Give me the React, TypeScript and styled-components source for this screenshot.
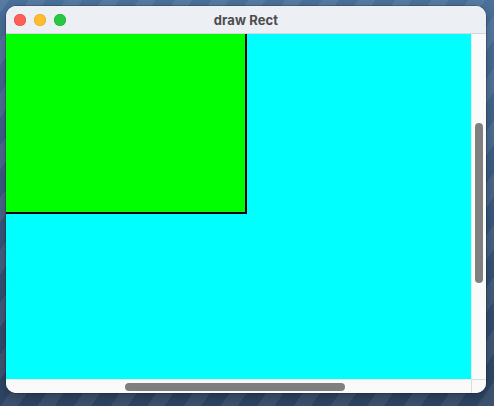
import React from "react";
import styled, { createGlobalStyle } from "styled-components";

const GlobalStyle = createGlobalStyle`
  html, body {
    margin: 0;
    padding: 0;
    width: 494px;
    height: 406px;
    overflow: hidden;
  }
  body {
    font-family: Inter, "Noto Sans", "Liberation Sans", sans-serif;
  }
`;

const Desktop = styled.div`
  box-sizing: border-box;
  width: 494px;
  height: 406px;
  padding: 6px 8px 13px 6px;
  display: flex;
  background:
    repeating-linear-gradient(
      -55deg,
      rgba(255, 255, 255, 0.07) 0px,
      rgba(255, 255, 255, 0.07) 14px,
      rgba(0, 0, 0, 0) 14px,
      rgba(0, 0, 0, 0) 30px
    ),
    linear-gradient(180deg, #4a719a 0%, #3a5b80 45%, #2d4463 100%);
`;

const Window = styled.div`
  flex: 1;
  display: flex;
  flex-direction: column;
  border-radius: 10px;
  overflow: hidden;
  background: #fafafa;
  box-shadow: 0 0 0 0.5px rgba(0, 0, 0, 0.35), 0 4px 12px rgba(0, 0, 0, 0.25);
`;

const TitleBar = styled.div`
  position: relative;
  height: 27px;
  flex: 0 0 27px;
  display: flex;
  align-items: center;
  justify-content: center;
  background: #eceff3;
  border-bottom: 1px solid #d4d6da;
`;

const Lights = styled.div`
  position: absolute;
  left: 8px;
  top: 8px;
  display: flex;
  gap: 8px;
`;

const Light = styled.span<{ $color: string; $ring: string }>`
  width: 12px;
  height: 12px;
  border-radius: 50%;
  background: ${(p) => p.$color};
  box-shadow: inset 0 0 0 0.5px ${(p) => p.$ring};
`;

const Title = styled.span`
  font-size: 13px;
  font-weight: 700;
  color: #4d4d4d;
  letter-spacing: 0.1px;
`;

const Body = styled.div`
  flex: 1;
  display: grid;
  grid-template-columns: 1fr 15px;
  grid-template-rows: 1fr 14px;
  min-height: 0;
`;

const Canvas = styled.div`
  background: #00ffff;
  overflow: hidden;
  display: block;
  line-height: 0;
`;

const VTrack = styled.div`
  background: #fafafa;
  border-left: 1px solid #e8e8e8;
  padding: 89px 0 0 3px;
  box-sizing: border-box;
`;

const VThumb = styled.div`
  width: 8px;
  height: 160px;
  border-radius: 4px;
  background: #7f7f7f;
`;

const HTrack = styled.div`
  background: #fafafa;
  border-top: 1px solid #e8e8e8;
  padding: 3px 0 0 119px;
  box-sizing: border-box;
`;

const HThumb = styled.div`
  width: 220px;
  height: 8px;
  border-radius: 4px;
  background: #7f7f7f;
`;

const Corner = styled.div`
  background: #fafafa;
  border-top: 1px solid #dcdcdc;
  border-left: 1px solid #dcdcdc;
`;

export default function App() {
  return (
    <>
      <GlobalStyle />
      <Desktop>
        <Window>
          <TitleBar>
            <Lights>
              <Light $color="#fe5f57" $ring="#e0443e" />
              <Light $color="#febc2e" $ring="#dea123" />
              <Light $color="#28c840" $ring="#1aab29" />
            </Lights>
            <Title>draw Rect</Title>
          </TitleBar>
          <Body>
            <Canvas>
              <svg width="465" height="345" viewBox="0 0 465 345">
                <rect
                  x={-2}
                  y={-2}
                  width={242}
                  height={181}
                  fill="#00ff00"
                  stroke="#000000"
                  strokeWidth={2}
                />
              </svg>
            </Canvas>
            <VTrack>
              <VThumb />
            </VTrack>
            <HTrack>
              <HThumb />
            </HTrack>
            <Corner />
          </Body>
        </Window>
      </Desktop>
    </>
  );
}
